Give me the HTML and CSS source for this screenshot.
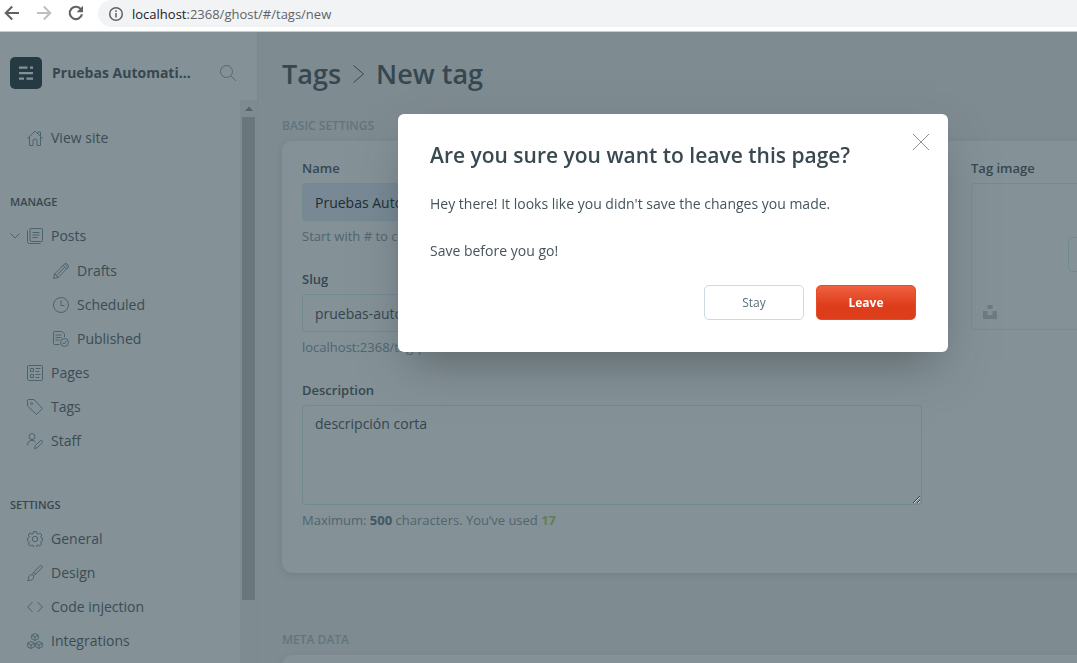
FILE: index.html
```html
<!DOCTYPE html>
<html lang="en">
<head>
<meta charset="utf-8">
<title>New tag</title>
<link rel="stylesheet" href="styles.css">
</head>
<body>
<div class="window">
  <header class="browser-bar">
    <button class="browser-button" aria-label="Back"><svg width="16" height="16" viewBox="0 0 16 16" fill="none" stroke="#5f6368" stroke-width="2"><path d="M15 8H2M8.200 1.500 1.700 8l6.500 6.500"/></svg></button>
    <button class="browser-button" aria-label="Forward" disabled><svg width="16" height="16" viewBox="0 0 16 16" fill="none" stroke="#bdc0c3" stroke-width="2"><path d="M1 8h13M7.800 1.500 14.300 8l-6.500 6.500"/></svg></button>
    <button class="browser-button" aria-label="Reload"><svg width="16" height="16" viewBox="0 0 16 16"><path d="M13.200 4.600A6.200 6.200 0 1 0 14 9.300" fill="none" stroke="#5f6368" stroke-width="2.100"/><path d="M15 .8v6.400H8.600z" fill="#5f6368"/></svg></button>
    <div class="address">
      <svg width="16" height="16" viewBox="0 0 16 16" fill="none" stroke="#5f6368" stroke-width="1.500"><circle cx="8" cy="8" r="6.300"/><path d="M8 7v4.500M8 4.300v1.600"/></svg>
      <span class="url"><span class="url-host">localhost</span>:2368/ghost/#/tags/new</span>
    </div>
  </header>

  <div class="app">
    <aside class="sidebar">
      <div class="site">
        <svg width="32" height="32" viewBox="0 0 32 32"><rect width="32" height="32" rx="5" fill="#263a43"/><g fill="#849197"><path d="M9 9.500h8.500v2.200H9zM20 9.500h3v2.200h-3zM9 15h14v2.200H9zM9 20.500h5v2.200H9zM16.500 20.500H23v2.200h-6.500z"/></g></svg>
        <span class="site-name">Pruebas Automati...</span>
        <button class="search" aria-label="Search"><svg width="18" height="18" viewBox="0 0 18 18" fill="none" stroke="#546a73"><circle cx="7.500" cy="7.500" r="6"/><path d="m12 12 5 5"/></svg></button>
      </div>
      <div class="sidebar-body">
        <nav class="nav">
          <a class="nav-item" href="#site"><svg class="icon" viewBox="0 0 16 16"><path d="M.5 8.500 8 1l7.500 7.500M2.500 7v8.500H6V11a2 2 0 0 1 4 0v4.500h3.500V7M11 3.500V2h2.500v4"/></svg>View site</a>

          <h2 class="nav-heading">Manage</h2>
          <a class="nav-item nav-open" href="#posts"><svg class="chevron" width="10" height="6" viewBox="0 0 10 6"><path d="m.5.5 4.500 4.500L9.500.5"/></svg><svg class="icon" viewBox="0 0 16 16"><path d="M3.500.5h11a1 1 0 0 1 1 1v11a1 1 0 0 1-1 1h-10a1.500 1.500 0 0 1-1.500-1.500V1a.5.500 0 0 1 .5-.5zM.5 2.500v11a2 2 0 0 0 2 2h11M5.500 4.500h7M5.500 7h7M5.500 9.500h5"/></svg>Posts</a>
          <div class="subnav">
            <a class="nav-item" href="#drafts"><svg class="icon" viewBox="0 0 16 16"><path d="m.5 15.500 1.200-4.700L11.500 1a1.700 1.700 0 0 1 2.500 0l1 1a1.700 1.700 0 0 1 0 2.500l-9.800 9.800zM1.700 10.800l3.500 3.500M10 2.500 13.500 6M3.400 12.600l8.400-8.400M11.500 1l3.500 3.500"/></svg>Drafts</a>
            <a class="nav-item" href="#scheduled"><svg class="icon" viewBox="0 0 16 16"><circle cx="8" cy="8" r="7.500"/><path d="M8 3.500v5h3.500"/></svg>Scheduled</a>
            <a class="nav-item" href="#published"><svg class="icon" viewBox="0 0 16 16"><path d="M6.500 13.500h-5a1 1 0 0 1-1-1v-11a1 1 0 0 1 1-1h7.500l2.500 2.500v3M2.500 4h6M2.500 6.500h6M2.500 9h4"/><circle cx="11.500" cy="11.500" r="4"/><path d="m9.500 11.500 1.500 1.500 2.500-3"/></svg>Published</a>
          </div>
          <a class="nav-item" href="#pages"><svg class="icon" viewBox="0 0 16 16"><rect x=".5" y=".5" width="15" height="15" rx="1"/><path d="M3.500 3.500h3v3h-3zM3.500 9.500h3v3h-3zM8.500 3.500h5M8.500 6.500h4M8.500 9.500h5M8.500 12.500h4"/></svg>Pages</a>
          <a class="nav-item" href="#tags"><svg class="icon" viewBox="0 0 16 16"><path d="M.5 1.500a1 1 0 0 1 1-1H7L15.500 9.500 9.500 15.500.5 7z"/><circle cx="4.500" cy="4.500" r="1"/></svg>Tags</a>
          <a class="nav-item" href="#staff"><svg class="icon" viewBox="0 0 16 16"><circle cx="5" cy="3.500" r="3"/><path d="M.5 12.500C.5 9 2 7.500 5 7.500c1.500 0 2.700.5 3.500 1.500M7.500 15.500l.7-2.700 5-5a1.400 1.400 0 0 1 2 2l-5 5z"/></svg>Staff</a>

          <h2 class="nav-heading">Settings</h2>
          <a class="nav-item" href="#general"><svg class="icon" viewBox="0 0 16 16"><circle cx="8" cy="8" r="2.700"/><path d="M6.600.6h2.800l.4 2 1.300.5L12.900 2l1.900 2-1.100 1.700.5 1.200 1.300.4v2.500l-1.300.5-.5 1.200 1 1.700-1.900 1.900-1.700-1.100-1.300.5-.4 1.900H6.600l-.4-1.900-1.300-.5-1.700 1.100-1.900-1.900 1-1.700-.5-1.200L.5 9.700V7.200l1.300-.4.5-1.200L1.200 4l1.900-2 1.800 1.100 1.300-.5z"/></svg>General</a>
          <a class="nav-item" href="#design"><svg class="icon" viewBox="0 0 16 16"><path d="M.5 15.500c1.500-1 .7-3.500 2-5 1-1.200 2.700-1 3.500 0s.8 2.500-.3 3.700c-1.200 1.200-3.200 1.300-5.200 1.300zM4.700 9.700 12.500 1.200c.8-.8 1.700-.8 2.300-.2s.6 1.500-.2 2.300L6.500 11M6.800 7.500l2 2"/></svg>Design</a>
          <a class="nav-item" href="#code"><svg class="icon" viewBox="0 0 16 16"><path d="M5.500 3 .7 8l4.800 5M10.500 3l4.800 5-4.800 5"/></svg>Code injection</a>
          <a class="nav-item" href="#integrations"><svg class="icon" viewBox="0 0 16 16"><path d="m8 .5 3.300 1.700v3.600L8 7.500 4.700 5.800V2.200zM4.700 2.200 8 4l3.300-1.800M8 4v3.500M4 8.500l3.300 1.700v3.600L4 15.500.7 13.800v-3.600zM.7 10.200 4 12l3.300-1.800M4 12v3.500M12 8.500l3.300 1.700v3.600L12 15.500l-3.300-1.700v-3.600zM8.700 10.200 12 12l3.300-1.800M12 12v3.500"/></svg>Integrations</a>
        </nav>
        <div class="scroll-track"><svg width="8" height="5" viewBox="0 0 8 5"><path d="M0 5 4 .5 8 5z" fill="#55636a"/></svg><div class="scroll-thumb"></div></div>
      </div>
    </aside>

    <main class="main">
      <h1 class="page-title"><a href="#tags">Tags</a><svg width="11" height="18" viewBox="0 0 11 18" fill="none" stroke="#36474f"><path d="m.5.500 10 8.500-10 8.500"/></svg><span>New tag</span></h1>
      <h2 class="section-heading">Basic settings</h2>
      <section class="card">
        <div class="fields">
          <div class="field">
            <label for="name">Name</label>
            <input class="control filled" id="name" type="text" value="Pruebas Automatizadas">
            <p class="hint">Start with # to create</p>
          </div>
          <div class="field">
            <label for="slug">Slug</label>
            <input class="control" id="slug" type="text" value="pruebas-automatizadas">
            <p class="hint">localhost:2368/tag/pruebas-automatizadas/</p>
          </div>
          <div class="field">
            <label for="description">Description</label>
            <textarea class="control area" id="description">descripción corta</textarea>
            <p class="hint">Maximum: <b>500</b> characters. You’ve used <b class="count">17</b></p>
          </div>
        </div>
        <div class="image-field">
          <span class="image-label">Tag image</span>
          <div class="dropzone">
            <button class="upload" aria-label="Upload tag image"></button>
            <svg class="unsplash" width="14" height="14" viewBox="0 0 14 14"><path d="M4.500 0h5v4h-5zM0 6h4.500v4h5V6H14v8H0z" fill="#6d7b82"/></svg>
          </div>
        </div>
      </section>
      <h2 class="section-heading">Meta data</h2>
      <section class="card"></section>
    </main>
  </div>
</div>

<div class="overlay">
  <div class="modal" role="dialog" aria-labelledby="modal-title">
    <div class="modal-head">
      <h2 class="modal-title" id="modal-title">Are you sure you want to leave this page?</h2>
      <button class="close" aria-label="Close"><svg width="16" height="16" viewBox="0 0 16 16" stroke="#8c9498"><path d="m0 0 16 16M16 0 0 16"/></svg></button>
    </div>
    <p>Hey there! It looks like you didn't save the changes you made.</p>
    <p>Save before you go!</p>
    <div class="actions">
      <button class="button">Stay</button>
      <button class="button danger">Leave</button>
    </div>
  </div>
</div>
</body>
</html>
```
FILE: styles.css
```css
* { box-sizing: border-box; }

body {
  margin: 0;
  font: 14px/20px "Open Sans", "Noto Sans", sans-serif;
  color: #36474f;
  background: #7e8b91;
}

h1, h2, p { margin: 0; }
a { color: inherit; text-decoration: none; }
button { font: inherit; padding: 0; border: 0; background: none; }
svg { flex: none; display: block; }

.window {
  height: 100vh;
  display: flex;
  flex-direction: column;
  overflow: hidden;
}

/* Browser bar */
.browser-bar {
  flex: none;
  display: flex;
  align-items: flex-start;
  height: 32px;
  padding-left: 4px;
  background: #fff;
  border-bottom: 1px solid #c9cccd;
}
.browser-button { width: 32px; padding-top: 5px; }
.address {
  flex: 1;
  display: flex;
  align-items: center;
  gap: 8px;
  height: 27px;
  margin-left: -2px;
  padding-left: 10px;
  border-radius: 14px 0 0 14px;
  background: #f1f3f4;
}
.url { font-size: 13px; color: #5f6368; }
.url-host { color: #202124; }

/* Sidebar */
.app { flex: 1; min-height: 0; display: flex; }
.sidebar {
  flex: none;
  width: 258px;
  display: flex;
  flex-direction: column;
  background: #849197;
  border-right: 1px solid #7a888f;
}
.site {
  flex: none;
  display: flex;
  align-items: center;
  height: 68px;
  padding: 14px 20px 0 10px;
}
.site-name { flex: 1; margin-left: 10px; font-weight: 700; white-space: nowrap; }
.search { flex: none; }
.sidebar-body { flex: 1; min-height: 0; display: flex; overflow: hidden; }
.nav { flex: 1; padding: 21px 0 0 10px; }
.nav-item {
  display: flex;
  align-items: center;
  gap: 8px;
  height: 34px;
  padding-left: 17px;
  color: #3b4c55;
}
.nav-open { padding-left: 0; }
.nav-open .chevron { margin-right: -1px; }
.subnav { padding: 1px 0 0 26px; }
.nav-heading {
  margin-top: 30px;
  font-size: 11px;
  font-weight: 600;
  line-height: 34px;
  text-transform: uppercase;
}
.icon { width: 16px; height: 16px; }
.icon, .chevron { fill: none; stroke: #4c636d; }
.scroll-track {
  display: flex;
  flex-direction: column;
  align-items: center;
  gap: 6px;
  width: 17px;
  padding: 6px 2px 0;
  background: #7e8b91;
}
.scroll-thumb { width: 13px; height: 483px; background: #69777d; }

/* Tag form */
.main {
  flex: 1;
  min-width: 0;
  padding: 22px 0 0 24px;
  overflow: hidden;
}
.page-title {
  display: flex;
  align-items: center;
  gap: 12px;
  font-size: 27px;
  font-weight: 600;
  line-height: 40px;
}
.section-heading {
  margin: 22px 0 5px;
  font-size: 12px;
  font-weight: 600;
  line-height: 20px;
  color: #62757e;
  text-transform: uppercase;
}
.card {
  display: grid;
  grid-template-columns: 620px 341px;
  gap: 49px;
  width: 1050px;
  padding: 18px 20px 43px;
  border-radius: 10px;
  background: #849197;
  box-shadow: 0 2px 6px rgba(60, 80, 90, .15);
}
.card + .section-heading { margin-top: 57px; }
.field { height: 111px; }
.field:last-child { height: auto; }
.field label, .image-label {
  display: block;
  font-size: 13px;
  font-weight: 600;
  line-height: 19px;
  margin-bottom: 5px;
}
.control {
  display: block;
  width: 100%;
  height: 38px;
  padding: 0 12px;
  border: 1px solid #738992;
  border-radius: 4px;
  background: transparent;
  color: #35454d;
  font: inherit;
}
.filled { background: #788995; color: #202d33; }
.area { height: 100px; padding-top: 8px; resize: both; }
.hint { padding-top: 5px; font-size: 13px; color: #4f656f; }
.hint b { color: #405861; }
.hint .count { color: #617f55; }
.dropzone {
  display: flex;
  flex-direction: column;
  align-items: center;
  height: 147px;
  padding: 53px 11px 10px;
  border: 1px solid #788990;
  border-radius: 4px;
}
.upload { width: 148px; height: 36px; border: 1px solid #738992; border-radius: 5px; }
.unsplash { align-self: flex-start; margin-top: 33px; }

/* Dialog */
.overlay { position: fixed; inset: 0; padding: 114px 0 0 398px; }
.modal {
  width: 550px;
  padding: 26px 32px 32px;
  border-radius: 6px;
  background: #fff;
  box-shadow: 0 20px 44px -12px rgba(60, 70, 70, .6);
}
.modal-head { display: flex; justify-content: space-between; }
.modal-title { font-size: 21px; font-weight: 600; line-height: 30px; color: #394951; }
.close { align-self: flex-start; margin: -6px -13px 0 0; }
.close svg { margin: 0; }
.modal p { margin-top: 23px; line-height: 24px; color: #45545b; }
.modal .modal-head + p { margin-top: 22px; }
.actions { display: flex; justify-content: flex-end; gap: 12px; margin-top: 22px; }
.button {
  width: 100px;
  height: 35px;
  border: 1px solid #ccd9de;
  border-radius: 5px;
  font-size: 12px;
  color: #587079;
}
.danger {
  border-color: #e54c2a;
  background: linear-gradient(#f0603f, #dd3d1b 60%);
  color: #fff;
  font-weight: 700;
}
```
